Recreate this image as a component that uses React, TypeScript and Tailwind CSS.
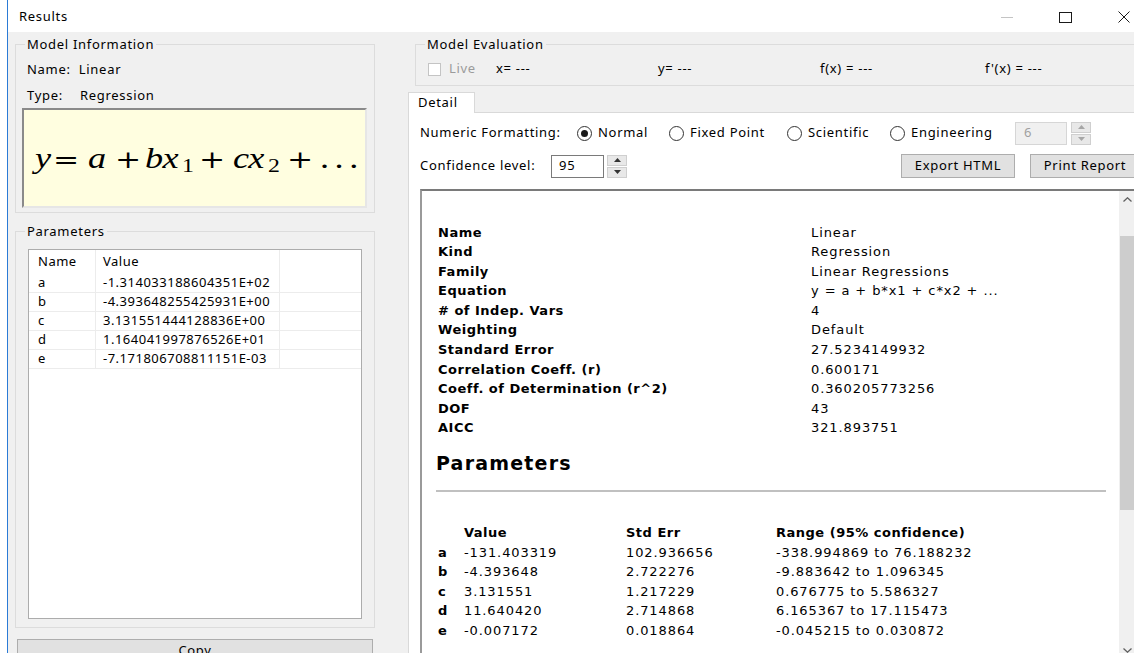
import React from "react";

const UI = "font-['Noto_Sans',sans-serif] text-[13px] tracking-[0.7px] text-black";
const RPT = "font-['DejaVu_Sans',sans-serif] text-[13px] tracking-[0.9px] text-black";

function Legend({ children }: { children: React.ReactNode }) {
  return <legend className="ml-[9px] px-[2px] leading-[18px]">{children}</legend>;
}

function Radio({ checked }: { checked?: boolean }) {
  return (
    <span className="w-[15px] h-[15px] shrink-0 rounded-full border border-[#333] bg-white flex items-center justify-center">
      {checked && <span className="w-[7px] h-[7px] rounded-full bg-[#1a1a1a]" />}
    </span>
  );
}

function Spin({ disabled }: { disabled?: boolean }) {
  const c = disabled ? "#a6a6a6" : "#333";
  return (
    <div className="flex flex-col w-[20px] h-[23px] gap-[1px] shrink-0">
      <div className="flex-1 bg-[#e8e8e8] border border-[#cfcfcf] flex items-center justify-center">
        <svg width="7" height="4" viewBox="0 0 7 4">
          <path d="M0 4 L3.5 0 L7 4Z" fill={c} />
        </svg>
      </div>
      <div className="flex-1 bg-[#e8e8e8] border border-[#cfcfcf] flex items-center justify-center">
        <svg width="7" height="4" viewBox="0 0 7 4">
          <path d="M0 0 L3.5 4 L7 0Z" fill={c} />
        </svg>
      </div>
    </div>
  );
}

const params = [
  ["a", "-1.314033188604351E+02"],
  ["b", "-4.393648255425931E+00"],
  ["c", "3.131551444128836E+00"],
  ["d", "1.164041997876526E+01"],
  ["e", "-7.171806708811151E-03"],
];

const info = [
  ["Name", "Linear"],
  ["Kind", "Regression"],
  ["Family", "Linear Regressions"],
  ["Equation", "y = a + b*x1 + c*x2 + ..."],
  ["# of Indep. Vars", "4"],
  ["Weighting", "Default"],
  ["Standard Error", "27.5234149932"],
  ["Correlation Coeff. (r)", "0.600171"],
  ["Coeff. of Determination (r^2)", "0.360205773256"],
  ["DOF", "43"],
  ["AICC", "321.893751"],
];

const fit = [
  ["a", "-131.403319", "102.936656", "-338.994869 to 76.188232"],
  ["b", "-4.393648", "2.722276", "-9.883642 to 1.096345"],
  ["c", "3.131551", "1.217229", "0.676775 to 5.586327"],
  ["d", "11.640420", "2.714868", "6.165367 to 17.115473"],
  ["e", "-0.007172", "0.018864", "-0.045215 to 0.030872"],
];

// Typeset regression formula: math italic letters, upright operators and subscripts
function Formula() {
  const it = "font-['Liberation_Serif',serif] italic inline-block";
  const op = "font-['DejaVu_Serif',serif] text-[25px] inline-block";
  return (
    <div className="pl-[11px] flex items-center h-full">
      <div className="flex items-baseline origin-left scale-x-[1.25] text-[29px] leading-none text-black tracking-normal">
        <span className={`${it} w-[14.4px]`}>y</span>
        <span className={`${op} w-[28px]`}>=</span>
        <span className={`${it} w-[21.6px]`}>a</span>
        <span className={`${op} w-[24px]`}>+</span>
        <span className={`${it} w-[14px]`}>b</span>
        <span className={`${it} w-[15.6px]`}>x</span>
        <sub className="font-['Liberation_Serif',serif] text-[19px] inline-block w-[13.6px]">1</sub>
        <span className={`${op} w-[27.2px]`}>+</span>
        <span className={`${it} w-[12.2px]`}>c</span>
        <span className={`${it} w-[15.8px]`}>x</span>
        <sub className="font-['Liberation_Serif',serif] text-[19px] inline-block w-[15.2px]">2</sub>
        <span className={`${op} w-[26.4px]`}>+</span>
        <span className="font-['Liberation_Serif',serif] tracking-[4.5px]">...</span>
      </div>
    </div>
  );
}

function LeftColumn() {
  return (
    <div className="w-[360px] shrink-0 flex flex-col">
      <fieldset className="border border-[#dcdcdc]">
        <Legend>Model Information</Legend>
        <div className="pl-[11px] pr-[7px] pb-[4px]">
          <div className="mt-[7px] leading-[18px]">Name:&nbsp; Linear</div>
          <div className="mt-[8px] leading-[18px] flex">
            <span className="w-[53px]">Type:</span>
            <span>Regression</span>
          </div>
          <div className="mt-[4px] -ml-[5px] h-[100px] bg-[#fffee0] border-2 border-t-[#8a8a8a] border-l-[#8a8a8a] border-r-[#e6e6e6] border-b-[#e6e6e6]">
            <Formula />
          </div>
        </div>
      </fieldset>

      <fieldset className="mt-[9px] border border-[#dcdcdc]">
        <Legend>Parameters</Legend>
        <div className="px-[12px] pb-[8px]">
          <div className="mt-[9px] h-[370px] bg-white border border-[#acacac] tracking-[0.5px]">
            <div className="flex h-[24px]">
              <div className="w-[67px] pl-[9px] border-r border-[#ececec] flex items-center">Name</div>
              <div className="w-[184px] pl-[7px] border-r border-[#ececec] flex items-center">Value</div>
              <div className="flex-1" />
            </div>
            {params.map(([n, v]) => (
              <div key={n} className="flex h-[19px] border-b border-[#ececec]">
                <div className="w-[67px] pl-[9px] border-r border-[#ececec] flex items-center">{n}</div>
                <div className="w-[184px] pl-[7px] border-r border-[#ececec] flex items-center">{v}</div>
                <div className="flex-1" />
              </div>
            ))}
          </div>
        </div>
      </fieldset>

      <div className="mt-[11px] mx-[2px] h-[23px] shrink-0 bg-[#e1e1e1] border border-[#adadad] flex items-center justify-center">
        Copy
      </div>
    </div>
  );
}

function Report() {
  return (
    <div className="mt-[11px] w-[718px] h-[472px] flex border-2 border-t-[#7a7a7a] border-l-[#9a9a9a] border-r-[#e3e3e3] border-b-[#e3e3e3] bg-white">
      <div className={`flex-1 pt-[32px] pl-[14px] pr-[13px] ${RPT}`}>
        <div className="leading-[19.6px]">
          {info.map(([k, v]) => (
            <div key={k} className="flex">
              <span className="w-[375px] pl-[2px] font-bold tracking-[0.5px]">{k}</span>
              <span>{v}</span>
            </div>
          ))}
        </div>
        <div className="mt-[13px] text-[19px] leading-[24px] font-bold tracking-[1.2px]">Parameters</div>
        <div className="mt-[15px] border-t-2 border-[#c0c0c0]" />
        <div className="mt-[31px] leading-[19.6px]">
          <div className="flex font-bold tracking-[0.5px]">
            <span className="w-[28px]" />
            <span className="w-[162px]">Value</span>
            <span className="w-[150px]">Std Err</span>
            <span>Range (95% confidence)</span>
          </div>
          {fit.map(([p, v, s, r]) => (
            <div key={p} className="flex">
              <span className="w-[28px] pl-[2px] font-bold">{p}</span>
              <span className="w-[162px]">{v}</span>
              <span className="w-[150px]">{s}</span>
              <span>{r}</span>
            </div>
          ))}
        </div>
      </div>
      <div className="w-[17px] shrink-0 bg-[#f0f0f0] flex flex-col">
        <div className="h-[17px] flex items-center justify-center">
          <svg width="9" height="5" viewBox="0 0 9 5">
            <path d="M0.5 4.5 L4.5 0.8 L8.5 4.5" fill="none" stroke="#606060" strokeWidth="1.3" />
          </svg>
        </div>
        <div className="h-[28px]" />
        <div className="h-[274px] mx-[1px] bg-[#cdcdcd]" />
        <div className="flex-1" />
        <div className="h-[17px] flex items-center justify-center">
          <svg width="9" height="5" viewBox="0 0 9 5">
            <path d="M0.5 0.5 L4.5 4.2 L8.5 0.5" fill="none" stroke="#606060" strokeWidth="1.3" />
          </svg>
        </div>
      </div>
    </div>
  );
}

function RightColumn() {
  return (
    <div className="ml-[33px] w-[741px] shrink-0 flex flex-col">
      <fieldset className="ml-[7px] border border-[#dcdcdc]">
        <Legend>Model Evaluation</Legend>
        <div className="mt-[7px] mb-[7px] h-[18px] flex items-center pl-[12px]">
          <span className="w-[13px] h-[13px] border border-[#c4c4c4] bg-white shrink-0" />
          <span className="ml-[8px] w-[47px] text-[#9b9b9b]">Live</span>
          <span className="w-[162px]">x= ---</span>
          <span className="w-[162px]">y= ---</span>
          <span className="w-[165px]">f(x) = ---</span>
          <span>f'(x) = ---</span>
        </div>
      </fieldset>

      <div className="mt-[6px] flex h-[22px]">
        <div className="w-[67px] bg-white border-t border-l border-r border-[#d9d9d9] pl-[9px] flex items-center">
          Detail
        </div>
        <div className="flex-1 border-b border-[#d9d9d9]" />
      </div>

      <div className="flex-1 bg-white border-l border-[#d9d9d9] pl-[11px] pt-[9px]">
        <div className="flex items-center h-[23px]">
          <span className="w-[157px]">Numeric Formatting:</span>
          <span className="w-[92px] flex items-center gap-[6px]">
            <Radio checked />
            Normal
          </span>
          <span className="w-[118px] flex items-center gap-[6px]">
            <Radio />
            Fixed Point
          </span>
          <span className="w-[103px] flex items-center gap-[6px]">
            <Radio />
            Scientific
          </span>
          <span className="w-[125px] flex items-center gap-[6px]">
            <Radio />
            Engineering
          </span>
          <span className="w-[52px] h-[23px] border border-[#d6d6d6] bg-[#f0f0f0] text-[#a0a0a0] pl-[8px] flex items-center">
            6
          </span>
          <span className="ml-[4px]">
            <Spin disabled />
          </span>
        </div>

        <div className="mt-[10px] flex items-center h-[23px]">
          <span className="w-[131px]">Confidence level:</span>
          <span className="w-[53px] h-[23px] border border-[#7a7a7a] bg-white pl-[7px] flex items-center">95</span>
          <span className="ml-[3px]">
            <Spin />
          </span>
          <span className="ml-[274px] w-[114px] h-[24px] bg-[#e1e1e1] border border-[#adadad] flex items-center justify-center">
            Export HTML
          </span>
          <span className="ml-[15px] w-[110px] h-[24px] bg-[#e1e1e1] border border-[#adadad] flex items-center justify-center shrink-0">
            Print Report
          </span>
        </div>

        <Report />
      </div>
    </div>
  );
}

export default function App() {
  return (
    <div className={`w-[1134px] h-[653px] overflow-hidden bg-white flex ${UI}`}>
      <div className="w-[7px] shrink-0 bg-white" />
      <div className="w-[1px] shrink-0 bg-[#2b7bd6]" />
      <div className="flex-1 min-w-0 flex flex-col">
        <div className="h-[32px] shrink-0 bg-white flex items-center pl-[11px] pr-[4px] pt-[2px]">
          <span>Results</span>
          <div className="ml-auto flex items-center">
            <span className="w-[12px] h-[1px] bg-[#c4c4c4]" />
            <span className="ml-[46px] w-[13px] h-[11px] border border-[#1a1a1a]" />
            <svg className="ml-[46px]" width="12" height="12" viewBox="0 0 12 12">
              <path d="M0.5 0.5 L11.5 11.5 M11.5 0.5 L0.5 11.5" stroke="#1a1a1a" strokeWidth="1" />
            </svg>
          </div>
        </div>
        <div className="flex-1 min-h-0 bg-[#f0f0f0] flex pl-[7px] pt-[3px] overflow-hidden">
          <LeftColumn />
          <RightColumn />
        </div>
      </div>
    </div>
  );
}
